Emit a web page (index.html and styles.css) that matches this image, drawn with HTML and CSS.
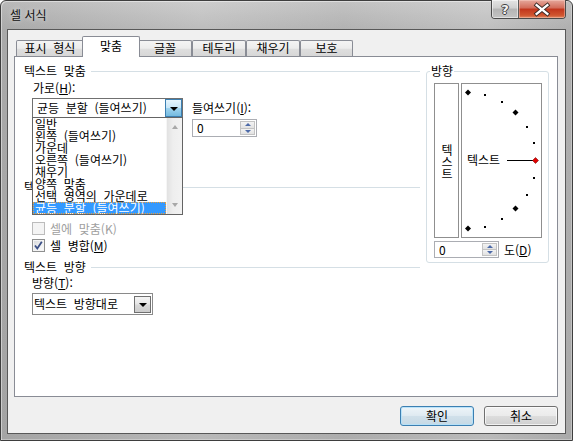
FILE: index.html
```html
<!DOCTYPE html>
<html lang="ko">
<head>
<meta charset="utf-8">
<title>셀 서식</title>
<link rel="stylesheet" href="styles.css">
</head>
<body>
<div class="window">
  <div class="titlebar">
    <span class="title">셀 서식</span>
    <div class="caption">
      <div class="cap-btn help"><span>?</span></div>
      <div class="cap-btn close">
        <svg width="47" height="17" viewBox="0 0 47 17">
          <path d="M18 4 L29 13 M29 4 L18 13" stroke="#3a2a26" stroke-width="4.2" stroke-linecap="square"/>
          <path d="M18 4 L29 13 M29 4 L18 13" stroke="#ffffff" stroke-width="2.4" stroke-linecap="square"/>
        </svg>
      </div>
    </div>
  </div>
  <div class="client">
    <div class="tabs">
      <div class="tab w68">표시 형식</div>
      <div class="tab active">맞춤</div>
      <div class="tab w54">글꼴</div>
      <div class="tab w54">테두리</div>
      <div class="tab w54">채우기</div>
      <div class="tab w53">보호</div>
    </div>
    <div class="panel">
      <div class="align-col">
        <div class="group-head"><span>텍스트 맞춤</span><i class="rule"></i></div>
        <div class="field-label">가로(<u>H</u>):</div>
        <div class="h-row">
          <div class="combo-wrap">
            <div class="combo">
              <span class="combo-text">균등 분할 (들여쓰기)</span>
              <span class="drop-btn hot"><i class="tri"></i></span>
            </div>
            <div class="listbox">
              <div class="items">
                <div class="item">일반</div>
                <div class="item">왼쪽 (들여쓰기)</div>
                <div class="item">가운데</div>
                <div class="item">오른쪽 (들여쓰기)</div>
                <div class="item">채우기</div>
                <div class="item">양쪽 맞춤</div>
                <div class="item">선택 영역의 가운데로</div>
                <div class="item selected">균등 분할 (들여쓰기)</div>
              </div>
              <div class="vscroll">
                <i class="sarrow up"></i>
                <i class="sarrow down"></i>
              </div>
            </div>
          </div>
          <div class="indent">
            <div class="indent-label">들여쓰기(<u>I</u>):</div>
            <div class="spin indent-spin">
              <span class="spin-val">0</span>
              <span class="spin-btns"><i class="sb"><i class="ua"></i></i><i class="sb"><i class="da"></i></i></span>
            </div>
          </div>
        </div>
        <div class="group-head gh2"><span>텍스트 조정</span><i class="rule"></i></div>
        <div class="check disabled c1"><span class="box"></span><span>셀에 맞춤(K)</span></div>
        <div class="check c2"><span class="box checked">
          <svg width="11" height="11" viewBox="0 0 11 11"><path d="M2 5.5 L4.3 8.5 L8.8 1.8" fill="none" stroke="#3b4f86" stroke-width="1.8"/></svg>
        </span><span>셀 병합(<u>M</u>)</span></div>
        <div class="group-head gh3"><span>텍스트 방향</span><i class="rule"></i></div>
        <div class="field-label dir-label">방향(<u>T</u>):</div>
        <div class="combo2">
          <span class="combo2-text">텍스트 방향대로</span>
          <span class="drop-btn plain"><i class="tri"></i></span>
        </div>
      </div>
      <fieldset class="orient">
        <legend>방향</legend>
        <div class="orient-boxes">
          <div class="vtext"><span>텍스트</span></div>
          <div class="dial">
            <svg width="79" height="153" viewBox="0 0 79 153">
              <g fill="#000">
                <polygon points="6,5.5 9,8.5 6,11.5 3,8.5"/>
                <rect x="22" y="10" width="2" height="2"/>
                <rect x="39" y="17" width="2" height="2"/>
                <polygon points="53.5,25.5 56.5,28.5 53.5,31.5 50.5,28.5"/>
                <rect x="64" y="42" width="2" height="2"/>
                <rect x="71" y="58" width="2" height="2"/>
                <rect x="71" y="93" width="2" height="2"/>
                <rect x="64" y="110" width="2" height="2"/>
                <polygon points="53.5,121.5 56.5,124.5 53.5,127.5 50.5,124.5"/>
                <rect x="39" y="134" width="2" height="2"/>
                <rect x="22" y="142" width="2" height="2"/>
                <polygon points="6,141.5 9,144.5 6,147.5 3,144.5"/>
              </g>
              <line x1="45" y1="76.5" x2="71" y2="76.5" stroke="#000" stroke-width="1"/>
              <polygon points="73.5,73.5 76.5,76.5 73.5,79.5 70.5,76.5" fill="#e00000" stroke="#600" stroke-width="0.5"/>
              <text x="5" y="81" class="dial-text">텍스트</text>
            </svg>
          </div>
        </div>
        <div class="deg-row">
          <div class="spin deg-spin">
            <span class="spin-val">0</span>
            <span class="spin-btns"><i class="sb"><i class="ua"></i></i><i class="sb"><i class="da"></i></i></span>
          </div>
          <span class="deg-label">도(<u>D</u>)</span>
        </div>
      </fieldset>
    </div>
    <div class="buttons">
      <div class="btn default">확인</div>
      <div class="btn">취소</div>
    </div>
  </div>
</div>
</body>
</html>
```

FILE: styles.css
```css
* { box-sizing: border-box; }
html, body { margin: 0; padding: 0; }
body {
  width: 573px; height: 441px; overflow: hidden;
  background: #fff;
  font-family: "Noto Sans CJK KR", "Noto Sans", sans-serif;
  font-size: 12px; color: #000;
  word-spacing: 3.3px;
}
u { text-decoration: underline; text-underline-offset: 1px; }

.window {
  width: 573px; height: 441px;
  border: 1px solid #3e3e3e;
  border-radius: 6px 6px 0 0;
  background:
    linear-gradient(to right, rgba(0,0,0,0.08), rgba(255,255,255,0.08) 35%, rgba(0,0,0,0.03) 60%, rgba(255,255,255,0.1) 85%, rgba(0,0,0,0.05)),
    linear-gradient(to bottom, #c9c9c9, #b7b7b7 30px, #b2b2b2);
  display: flex; flex-direction: column;
  box-shadow: inset 1px 1px 0 rgba(255,255,255,0.45), inset -1px -1px 0 rgba(255,255,255,0.3);
}

.titlebar { height: 28px; display: flex; align-items: flex-start; }
.title {
  margin: 8px 0 0 9px; line-height: 12px; color: #111; word-spacing: 0;
  text-shadow: 0 0 5px rgba(255,255,255,0.7);
}
.caption {
  margin-left: auto; margin-right: 6px; margin-top: -1px;
  display: flex; height: 19px;
  border: 1px solid #4a4a4a; border-top: none;
  border-radius: 0 0 4px 4px; overflow: hidden;
}
.cap-btn { height: 18px; display: flex; align-items: center; justify-content: center; }
.help {
  width: 27px;
  background: linear-gradient(to bottom, #e4e4e4, #cfcfcf 45%, #b4b4b4 50%, #c4c4c4);
  border-right: 1px solid #5a5a5a;
  box-shadow: inset 0 0 0 1px rgba(255,255,255,0.5);
}
.help span {
  font-family: "DejaVu Sans", sans-serif; font-weight: bold; font-size: 13px; line-height: 13px;
  color: #f4f4f4;
  text-shadow: 1px 0 0 #404040, -1px 0 0 #404040, 0 1px 0 #404040, 0 -1px 0 #404040;
}
.close {
  width: 46px;
  background: linear-gradient(to bottom, #e5a89c, #d26b58 45%, #c1351c 50%, #d0552f 85%, #e08a64);
  box-shadow: inset 0 0 0 1px rgba(255,220,210,0.4);
}

.client {
  margin: 0 6px;
  height: 405px;
  border: 1px solid #585858;
  background: #f0f0f0;
  display: flex; flex-direction: column;
}

.tabs { display: flex; align-items: flex-end; height: 21px; margin: 6px 0 0 8px; }
.tab {
  height: 17px;
  border: 1px solid #898c95; border-bottom: none;
  border-radius: 2px 2px 0 0;
  background: linear-gradient(to bottom, #f4f4f4, #ececec 45%, #dedede 52%, #d6d6d6);
  line-height: 12px; padding-top: 1px;
  text-align: center; white-space: nowrap;
}
.w68 { width: 68px; }
.w54 { width: 54px; }
.w53 { width: 53px; }
.tab.active {
  width: 58px; height: 21px; margin: 0 -2px;
  background: #fff; padding-top: 3px;
  position: relative; z-index: 1;
}

.panel {
  margin: -1px 0 0 6px;
  width: 544px; height: 341px;
  border: 1px solid #898c95;
  background: #fff;
  display: flex; align-items: flex-start;
}

.align-col { width: 405px; display: flex; flex-direction: column; }
.group-head { display: flex; align-items: center; height: 12px; line-height: 12px; padding-left: 9px; margin-top: 8px; }
.group-head span { white-space: nowrap; }
.rule { flex: 1; height: 1px; background: #d5dfe5; margin-left: 5px; margin-top: 1px; }
.gh2 { margin-top: 44px; }
.gh3 { margin-top: 9px; }

.field-label { line-height: 12px; height: 12px; padding-left: 18px; margin-top: 5px; }
.dir-label { margin-top: 4px; padding-left: 17px; }

.h-row { display: flex; align-items: flex-start; margin-top: 4px; padding-left: 17px; }
.combo-wrap { position: relative; width: 151px; height: 20px; }
.combo {
  width: 151px; height: 20px;
  border: 1px solid #707070;
  background: #fff;
  display: flex; align-items: center;
}
.combo-text { flex: 1; padding-left: 4px; line-height: 12px; white-space: nowrap; }
.drop-btn { display: flex; align-items: center; justify-content: center; }
.drop-btn.hot {
  width: 17px; height: 18px;
  border: 1px solid #3c7fb1;
  background: linear-gradient(to bottom, #e6f5fd, #c8e6f7 48%, #9fd3ef 52%, #74bbe0);
}
.tri { width: 0; height: 0; border-left: 4px solid transparent; border-right: 4px solid transparent; border-top: 4px solid #000; margin-top: 1px; }

.listbox {
  position: absolute; left: 0; top: 19px; z-index: 2;
  width: 151px; height: 98px;
  border: 1px solid #646464;
  background: #fff;
  display: flex;
}
.items { width: 133px; }
.item { height: 12px; line-height: 12px; padding-left: 2px; white-space: nowrap; }
.item.selected { background: #3399ff; color: #fff; outline: 1px dotted #e8a040; outline-offset: -1px; }
.vscroll {
  width: 16px; height: 96px;
  background: linear-gradient(to right, #e2e2e2, #eeeeee 40%, #f2f2f2);
  border-left: 1px solid #f6f6f6;
  display: flex; flex-direction: column; justify-content: space-between; align-items: center;
  padding: 7px 0 7px;
}
.sarrow { width: 0; height: 0; border-left: 3.5px solid transparent; border-right: 3.5px solid transparent; }
.sarrow.up { border-bottom: 4px solid #a8a8a8; }
.sarrow.down { border-top: 4px solid #a8a8a8; }

.indent { margin-left: 9px; display: flex; flex-direction: column; }
.indent-label { line-height: 12px; height: 12px; margin-top: 4px; }
.spin {
  display: flex; align-items: stretch;
  border: 1px solid #abadb3; background: #fff;
}
.indent-spin { width: 65px; height: 18px; margin-top: 5px; }
.spin-val { flex: 1; padding-left: 4px; line-height: 16px; }
.spin-btns { width: 16px; display: flex; flex-direction: column; padding: 1px 1px 1px 0; }
.sb {
  flex: 1; display: flex; align-items: center; justify-content: center;
  background: linear-gradient(to bottom, #f3f3f3, #e2e2e2);
  border: 1px solid #c3c3c3;
}
.sb + .sb { border-top: none; }
.ua { width: 0; height: 0; border-left: 3px solid transparent; border-right: 3px solid transparent; border-bottom: 3px solid #4d6aa8; }
.da { width: 0; height: 0; border-left: 3px solid transparent; border-right: 3px solid transparent; border-top: 3px solid #4d6aa8; }

.check { display: flex; align-items: center; height: 13px; padding-left: 17px; line-height: 12px; }
.c1 { margin-top: 29px; }
.c2 { margin-top: 4px; }
.check .box {
  width: 13px; height: 13px; margin-right: 5px;
  border: 1px solid #8e8f8f;
  background: linear-gradient(135deg, #d6d8da, #f4f5f6 70%, #fbfbfb);
  box-shadow: inset 0 0 0 1px #f4f4f4;
  display: flex; align-items: center; justify-content: center;
}
.check.disabled { color: #a0a0a0; }
.check.disabled .box { border-color: #bcbcbc; background: #f4f4f4; box-shadow: none; }

.combo2 {
  margin: 4px 0 0 17px;
  width: 121px; height: 22px;
  border: 1px solid #8a8a8a;
  background: #fff;
  display: flex; align-items: center;
}
.combo2-text { flex: 1; padding-left: 1px; line-height: 12px; white-space: nowrap; }
.drop-btn.plain {
  width: 17px; height: 17px; margin-right: 1px;
  border: 1px solid #707070;
  background: linear-gradient(to bottom, #f4f4f4, #e6e6e6 48%, #d8d8d8 52%, #cccccc);
}

.orient {
  margin: 8px 0 0 6px;
  width: 123px; min-width: 0;
  padding: 6px 6px 4px 7px;
  border: 1px solid #d5dfe5;
  border-radius: 3px;
}
.orient legend { padding: 0 1px; margin-left: -4px; line-height: 12px; font-size: 12px; }
.orient-boxes { display: flex; gap: 2px; height: 155px; }
.vtext {
  width: 25px; border: 1px solid #8f8f8f;
  display: flex; align-items: center; justify-content: center;
}
.vtext span { writing-mode: vertical-rl; text-orientation: upright; line-height: 12px; margin-top: 2px; }
.dial { width: 81px; border: 1px solid #8f8f8f; }
.dial svg { display: block; }
.dial-text { font-family: "Noto Sans CJK KR", sans-serif; font-size: 12px; fill: #000; }

.deg-row { display: flex; align-items: center; margin-top: 3px; }
.deg-spin { width: 65px; height: 17px; }
.deg-spin .spin-val { line-height: 15px; }
.deg-label { margin-left: 5px; line-height: 12px; }

.buttons { display: flex; justify-content: flex-end; gap: 10px; margin-top: 9px; padding-right: 7px; }
.btn {
  width: 74px; height: 20px;
  border: 1px solid #707070; border-radius: 3px;
  background: linear-gradient(to bottom, #f2f2f2, #ebebeb 48%, #dddddd 52%, #cfcfcf);
  box-shadow: inset 0 0 0 1px rgba(255,255,255,0.7);
  text-align: center; line-height: 18px;
}
.btn.default {
  border-color: #3c7fb1;
  background: linear-gradient(to bottom, #eef5f9, #dfeaf1 48%, #d0e0ea 52%, #c6d9e5);
  box-shadow: inset 0 0 0 1px rgba(180,225,250,0.9);
}
```
